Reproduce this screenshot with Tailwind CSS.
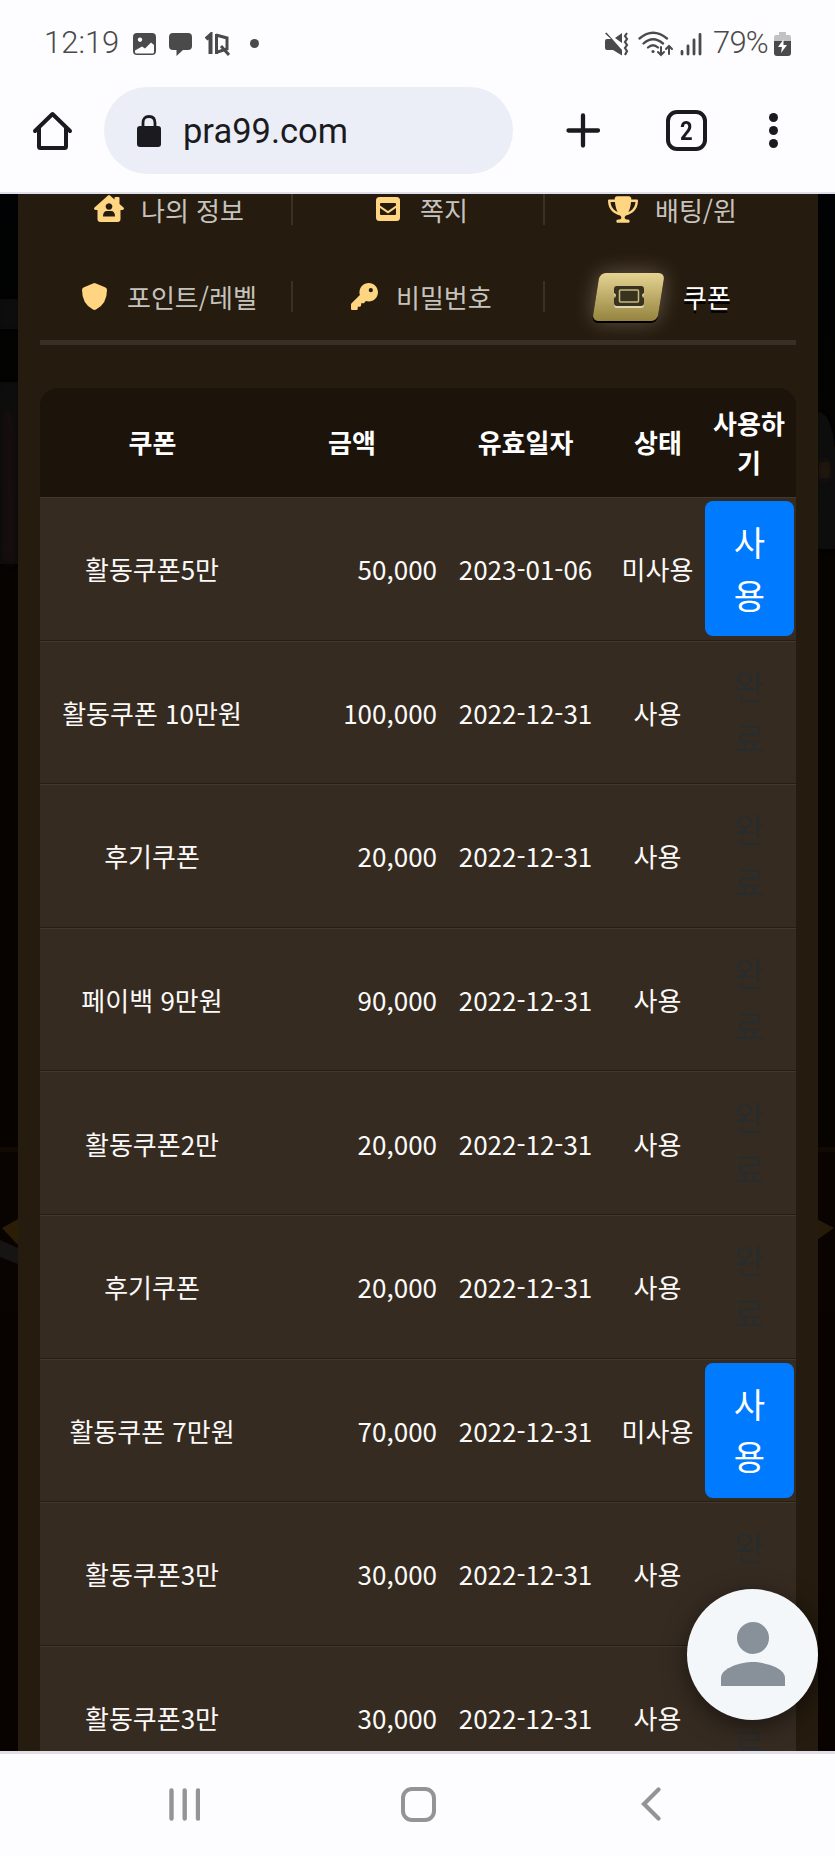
<!DOCTYPE html>
<html lang="ko">
<head>
<meta charset="utf-8">
<title>쿠폰</title>
<script src="https://cdn.jsdelivr.net/npm/@tailwindcss/browser@4"></script>
</head>
<body class="bg-[#fdfdff]">
<div class="flex h-[1856px] w-[835px] flex-col overflow-hidden bg-[#fdfdff] font-['Roboto',sans-serif]">

  <!-- Status bar and browser toolbar -->
  <header class="h-[194px] shrink-0 border-b-2 border-[#dfe0ea]">
    <div class="flex h-[87px] items-center pl-[44px] pr-[44px] text-[#4a4a4a]">
      <span class="w-[89px] whitespace-nowrap text-[31px] font-light leading-[85px] -mt-[2px]">12:19</span>
      <svg class="h-6 w-[23px]" viewBox="0 0 23 24"><path fill="#4a4a4a" fill-rule="evenodd" d="M4 1h15a4 4 0 0 1 4 4v14a4 4 0 0 1-4 4H4a4 4 0 0 1-4-4V5a4 4 0 0 1 4-4zM7 5.500a2.200 2.200 0 1 0 .01 0zM2 18.500V20q0 1.500 1.500 1.500h16q1.500 0 1.500-1.500v-7l-3-2.500-6 6-3-2z"/></svg>
      <svg class="ml-[13px] h-6 w-[23px]" viewBox="0 0 23 24"><path fill="#4a4a4a" d="M4 1h15a4 4 0 0 1 4 4v9a4 4 0 0 1-4 4h-5l-6.500 6V18H4a4 4 0 0 1-4-4V5a4 4 0 0 1 4-4z"/></svg>
      <svg class="ml-[13px] h-6 w-[25px]" viewBox="0 0 25 24" fill="none" stroke="#4a4a4a"><path d="M1 7L5.500 3v19" stroke-width="4"/><path d="M11.500 2v20M11 3l11 3v11l-11 3.500" stroke-width="3"/><path d="M16 14l8 9" stroke-width="3"/></svg>
      <span class="ml-5 size-[9px] rounded-full bg-[#4a4a4a]"></span>
      <div class="ml-auto flex items-center">
        <svg class="h-6 w-[24px]" viewBox="0 0 24 24" fill="#4a4a4a"><path d="M0 9q0-2 2-2h4L0 1.500 1.500.5 17 18v5.500L8 18H2q-2 0-2-2zM10 6l7-5v10z"/><path d="M22 1l-2 3 2 3-2 3 2 3-2 3 2 3-2 4" fill="none" stroke="#4a4a4a" stroke-width="2.200"/></svg>
        <svg class="ml-[9px] h-[26px] w-[36px]" viewBox="0 0 36 26" fill="none" stroke="#4a4a4a" stroke-width="2.300" stroke-linecap="round"><path d="M1.500 7.500Q15-4 29 7.500M5.500 12.500Q15 4 25 12.500M10 16.500Q15 12 20 16.500"/><circle cx="15" cy="20.500" r="1.600" fill="#4a4a4a" stroke="none"/><path d="M23 16v8m-3-3l3 3 3-3M31 23v-8m-3 3l3-3 3 3" stroke-width="2"/></svg>
        <svg class="ml-[6px] h-6 w-[22px]" viewBox="0 0 22 24" stroke="#4a4a4a" stroke-width="2.800" stroke-linecap="round"><path d="M2 19.500v2.500M8 14v8M14 8v14M20 2.500V22"/></svg>
        <span class="-mt-[2px] ml-[11px] w-[61px] whitespace-nowrap text-[31px] font-light leading-[85px] tracking-[-0.8px]">79%</span>
        <svg class="h-6 w-[17px]" viewBox="0 0 17 24"><path fill="#c2c2c4" d="M5 0h7v3h3q2 0 2 2v5H0V5q0-2 2-2h3z"/><path fill="#4a4a4a" d="M0 9h17v12q0 3-3 3H3q-3 0-3-3z"/><path fill="#fff" d="M9.500 7.500L4 15h4l-1 6 6-8H9.500z"/></svg>
      </div>
    </div>
    <div class="flex h-[87px] items-center pl-[32px] text-[#1b1b1f]">
      <svg class="size-[41px]" viewBox="0 0 41 41" fill="none" stroke="#1b1b1f" stroke-width="4" stroke-linecap="round" stroke-linejoin="round"><path d="M3 21L20.500 4 38 21M7 18v18.500q0 1.500 1.500 1.500h24q1.500 0 1.500-1.500V18"/></svg>
      <div class="ml-[31px] flex h-[87px] w-[409px] items-center rounded-full bg-[#ebeef7]">
        <svg class="ml-[33px] h-[32px] w-[24px]" viewBox="0 0 24 32"><rect y="11" width="24" height="21" rx="3" fill="#1b1b1f"/><path d="M6 12V8q0-6.500 6-6.500T18 8v4" fill="none" stroke="#1b1b1f" stroke-width="2.800"/></svg>
        <span class="ml-[22px] mt-[2px] text-[34.5px] leading-[85px]">pra99.com</span>
      </div>
      <svg class="ml-[53px] size-[35px]" viewBox="0 0 35 35" stroke="#1b1b1f" stroke-width="4.300" stroke-linecap="round"><path d="M17 2.500v30M2.500 17.500h29.500"/></svg>
      <div class="ml-[65px] flex size-[41px] items-center justify-center rounded-[11px] border-4 border-[#1b1b1f] text-[26px] font-bold leading-none"><span class="scale-x-85">2</span></div>
      <div class="ml-[62px] flex flex-col gap-[4px]"><i class="size-[9px] rounded-full bg-[#1b1b1f]"></i><i class="size-[9px] rounded-full bg-[#1b1b1f]"></i><i class="size-[9px] rounded-full bg-[#1b1b1f]"></i></div>
    </div>
  </header>

  <!-- Page -->
  <main class="relative h-[1557px] shrink-0 overflow-hidden bg-linear-to-b from-[#010203] via-[#060300] via-25% to-[#090300] font-['Noto_Sans_CJK_KR',sans-serif] text-[26px]">
    <!-- Dimmed backdrop artwork at both edges -->
    <svg class="absolute inset-0 h-full w-full" viewBox="0 0 835 1557">
      <defs><filter id="soft" x="-50%" y="-10%" width="200%" height="120%"><feGaussianBlur stdDeviation="4"/></filter></defs>
      <g filter="url(#soft)"><path d="M0 105h18v30H0z" fill="#0a0908"/><path d="M0 188h18v50H0z" fill="#0b0b0e"/><path d="M0 212Q16 216 18 245v124H0z" fill="#12100d"/><path d="M0 302l12-10 6 78H0z" fill="#15110e"/><path d="M817 215q15 5 18 40v100h-18z" fill="#0e0b09"/><path d="M820 268h8v16h-8z" fill="#2a1c07"/></g>
      <path d="M0 953h835v5H0z" fill="#100a03"/><path d="M0 958h835v160H0z" fill="#090401"/>
      <path d="M2 1034l16-9v26z" fill="#2c1e06"/><path d="M0 1046l18 8v16L0 1063z" fill="#171514"/><path d="M817 1025l17 9-17 12z" fill="#251b08"/>
    </svg>

    <section class="relative ml-[18px] h-full w-[800px] bg-[#251b0e] px-[22px]">
      <nav class="text-[#c6c3be]">
        <div class="grid h-[32px] grid-cols-[252px_252px_1fr] leading-[32px]">
          <div class="relative flex items-center pl-[54px]">
            <svg class="mt-[-3px] h-[27px] w-[30px]" viewBox="0 0 30 27"><path fill="#ffd582" fill-rule="evenodd" d="M14 .5q1-.9 2 0l4.500 4V3q0-1 1-1h3q1 0 1 1v6l4 3.500q1 1 0 2l-1 .5h-2v9q0 3-3 3h-17q-3 0-3-3v-9H1.500l-1-.5q-1-1 0-2zM15 8.200a3.300 3.300 0 1 0 .01 0zM9 21.500h12q0-5.500-4-5.500h-4q-4 0-4 5.500z"/></svg>
            <span class="ml-[17px]">나의 정보</span>
            <i class="absolute right-[-1px] top-0 h-[31px] w-[2px] bg-[#3b3125]"></i>
          </div>
          <div class="relative flex items-center pl-[84px]">
            <svg class="mt-[-3px] h-6 w-[24px]" viewBox="0 0 24 24"><rect width="24" height="24" rx="3.500" fill="#ffd582"/><path d="M4 8.500V7q0-1 1-1h14q1 0 1 1v1.500l-8 5.500zM4 11l8 5.500L20 11v6q0 1-1 1H5q-1 0-1-1z" fill="#251b0e"/></svg>
            <span class="ml-[20px]">쪽지</span>
            <i class="absolute right-[-1px] top-0 h-[31px] w-[2px] bg-[#3b3125]"></i>
          </div>
          <div class="flex items-center pl-[64px]">
            <svg class="mt-[-2px] h-[27px] w-[30px]" viewBox="0 0 576 512"><path fill="#ffd582" d="M400 0H176c-26.500 0-48.100 21.800-47.100 48.200c.2 5.300 .4 10.600 .7 15.800H24C10.700 64 0 74.700 0 88c0 92.600 33.500 157 78.500 200.700c44.300 43.100 98.300 64.800 138.100 75.800c23.400 6.500 39.400 26 39.400 45.600c0 20.900-17 37.900-37.900 37.900H192c-17.700 0-32 14.300-32 32s14.300 32 32 32H384c17.700 0 32-14.300 32-32s-14.300-32-32-32H357.900C337 448 320 431 320 410.100c0-19.600 15.900-39.200 39.400-45.600c39.900-11 93.900-32.700 138.200-75.800C542.500 245 576 180.600 576 88c0-13.300-10.700-24-24-24H446.400c.3-5.200 .5-10.400 .7-15.800C448.100 21.800 426.500 0 400 0zM48.900 112h84.400c9.100 90.100 29.200 150.300 51.900 190.600c-24.900-11-50.800-26.500-73.200-48.300c-32-31.100-58-76-63-142.300zM464.100 254.300c-22.400 21.800-48.300 37.300-73.200 48.300c22.700-40.300 42.800-100.500 51.900-190.600h84.400c-5.100 66.300-31.100 111.200-63 142.300z"/></svg>
            <span class="ml-[17px]">배팅/윈</span>
          </div>
        </div>
        <div class="mt-[55px] grid h-[32px] grid-cols-[252px_252px_1fr] leading-[32px]">
          <div class="relative flex items-center pl-[42px]">
            <svg class="mt-[-2px] h-[27px] w-[25px]" viewBox="0 0 25 27"><path fill="#ffd582" d="M12.500 0Q13 0 14 .5l9 3.800q2 .8 2 2.700 0 14-11 19.500-1.500.8-3 0Q0 21 0 7q0-1.900 2-2.700L11 .5q1-.5 1.500-.5z"/></svg>
            <span class="ml-[20px]">포인트/레벨</span>
            <i class="absolute right-[-1px] top-0 h-[31px] w-[2px] bg-[#3b3125]"></i>
          </div>
          <div class="relative flex items-center pl-[59px]">
            <svg class="mt-[-2px] size-[27px]" viewBox="0 0 512 512"><path fill="#ffd582" d="M336 352c97.200 0 176-78.800 176-176S433.200 0 336 0S160 78.800 160 176c0 18.700 2.900 36.800 8.300 53.700L7 391c-4.500 4.500-7 10.600-7 17v80c0 13.300 10.700 24 24 24h80c13.300 0 24-10.700 24-24V448h40c13.300 0 24-10.700 24-24V384h40c6.400 0 12.500-2.500 17-7l33.300-33.300c16.900 5.400 35 8.300 53.700 8.300zM376 96a40 40 0 1 1 0 80 40 40 0 1 1 0-80z"/></svg>
            <span class="ml-[18px]">비밀번호</span>
            <i class="absolute right-[-1px] top-0 h-[31px] w-[2px] bg-[#3b3125]"></i>
          </div>
          <div class="flex items-center pl-[52px] text-white">
            <div class="-my-4 flex h-[48px] w-[65px] -skew-x-9 items-center justify-center rounded-[6px] bg-linear-to-b from-[#e6d592] to-[#95843f] shadow-[0_2px_0_#000,0_0_22px_rgba(255,240,220,0.3)]">
              <svg class="h-[22px] w-[30px] skew-x-9" viewBox="0 0 30 22"><path d="M3 2h24q3 0 3 3v4q-2 .5-2 2.500t2 2.500v5q0 3-3 3H3q-3 0-3-3v-5q2-.5 2-2.500T0 9V5q0-3 3-3z" fill="#ded6b0"/><path d="M3 0h24q3 0 3 3v4q-2 .5-2 2.500t2 2.500v5q0 3-3 3H3q-3 0-3-3v-5q2-.5 2-2.500T0 7V3q0-3 3-3z" fill="#37331f"/><rect x="5.500" y="4" width="19" height="12" rx="1" fill="none" stroke="#c9ba83" stroke-width="1.500"/></svg>
            </div>
            <span class="ml-[22px] [text-shadow:0_3px_0_#000]">쿠폰</span>
          </div>
        </div>
      </nav>
      <hr class="mt-[27px] h-[5px] border-0 bg-[#3a2f25]">

      <div class="mt-[43px] w-[756px]">
        <div class="grid h-[109px] grid-cols-[225px_174px_173px_92px_92px] items-center rounded-t-[18px] bg-[#1c130a] pb-[2px] text-center font-bold leading-[39px] text-white">
          <span>쿠폰</span><span>금액</span><span>유효일자</span><span>상태</span><span class="pr-[2px]">사용하<br>기</span>
        </div>
        <div id="rows"></div>
      </div>
    </section>

    <button class="absolute left-[687px] top-[1395px] flex size-[131px] items-center justify-center rounded-full bg-[#f3f7fa] shadow-[0_6px_24px_rgba(0,0,0,0.5)]">
      <svg class="-mt-[2px] size-[64px]" viewBox="0 0 64 64" fill="#889199"><circle cx="32" cy="16" r="16"/><path d="M0 64v-8c0-10.500 21-16 32-16s32 5.500 32 16v8z"/></svg>
    </button>
  </main>

  <!-- System navigation -->
  <footer class="flex flex-1 items-start border-t-[3px] border-[#dfdee8] text-[#949496]">
    <svg class="ml-[169px] mt-[34px] h-[33px] w-[31px]" viewBox="0 0 31 33" stroke="currentColor" stroke-width="4.400" stroke-linecap="round"><path d="M2.500 2.500v28M15.700 2.500v28M29 2.500v28"/></svg>
    <span class="ml-[201px] mt-[33px] size-[35px] rounded-[11px] border-4 border-current"></span>
    <svg class="ml-[205px] mt-[33px] h-[34px] w-[20px]" viewBox="0 0 20 34" fill="none" stroke="currentColor" stroke-width="4.200" stroke-linecap="round"><path d="M17.500 2.500L3 17l14.500 14.500"/></svg>
  </footer>
</div>

<script>
  const coupons = [
    ['활동쿠폰5만', '50,000', '2023-01-06', true],
    ['활동쿠폰 10만원', '100,000', '2022-12-31', false],
    ['후기쿠폰', '20,000', '2022-12-31', false],
    ['페이백 9만원', '90,000', '2022-12-31', false],
    ['활동쿠폰2만', '20,000', '2022-12-31', false],
    ['후기쿠폰', '20,000', '2022-12-31', false],
    ['활동쿠폰 7만원', '70,000', '2022-12-31', true],
    ['활동쿠폰3만', '30,000', '2022-12-31', false],
    ['활동쿠폰3만', '30,000', '2022-12-31', false],
  ];
  document.getElementById('rows').innerHTML = coupons.map(([name, amount, date, open]) => `
    <div class="grid h-[143.6px] grid-cols-[225px_174px_173px_92px_92px] items-center border-b border-t border-b-[#261e14] border-t-[#43382c] bg-[#362b21] text-center leading-[39px] text-[#fbfaf8]">
      <span class="pr-[1px]">${name}</span><span class="pr-[2px] text-right">${amount}</span><span>${date}</span><span class="pr-[1px]">${open ? '미사용' : '사용'}</span>
      ${open
        ? '<button class="ml-[1px] flex h-[135px] w-[89px] flex-col items-center justify-center rounded-[8px] bg-[#007bff] text-[34px] leading-[52.5px] text-white"><span>사</span><span>용</span></button>'
        : '<span class="flex flex-col pr-[2px] text-[34px] leading-[52.5px] text-[#292c2c]"><span>완</span><span>료</span></span>'}
    </div>`).join('');
</script>
</body>
</html>
